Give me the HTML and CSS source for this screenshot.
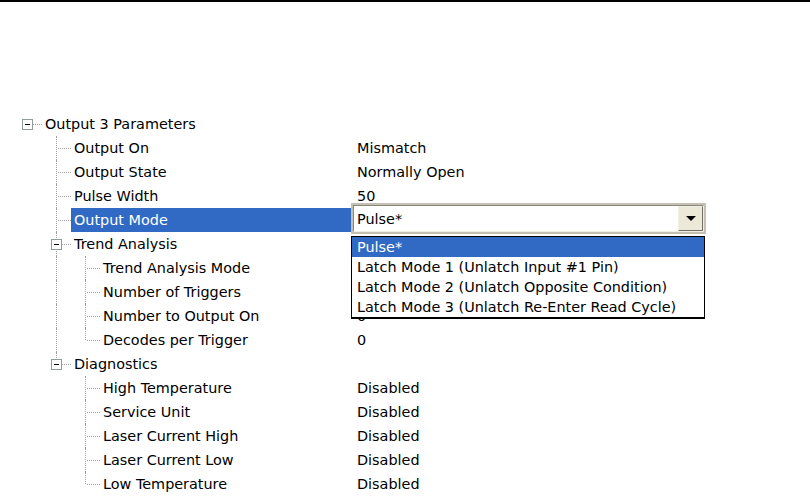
FILE: index.html
```html
<!DOCTYPE html>
<html>
<head>
<meta charset="utf-8">
<link rel="stylesheet" href="styles.css">
</head>
<body>
<div class="rule"></div>
<div class="tree">
  <div class="row">
    <div class="name">
      <span class="c root"><span class="box"></span></span>
      <span class="label">Output 3 Parameters</span>
    </div>
    <div class="value"></div>
  </div>
  <div class="row">
    <div class="name"><span class="c"></span><span class="c tee"></span><span class="label">Output On</span></div>
    <div class="value">Mismatch</div>
  </div>
  <div class="row">
    <div class="name"><span class="c"></span><span class="c tee"></span><span class="label">Output State</span></div>
    <div class="value">Normally Open</div>
  </div>
  <div class="row">
    <div class="name"><span class="c"></span><span class="c tee"></span><span class="label">Pulse Width</span></div>
    <div class="value">50</div>
  </div>
  <div class="row">
    <div class="name"><span class="c"></span><span class="c tee"></span><span class="label selected">Output Mode</span></div>
    <div class="value">
      <div class="combo">
        <div class="combo-inner">
          <span class="combo-text">Pulse*</span>
          <span class="combo-btn"><span class="arrow"></span></span>
        </div>
      </div>
      <div class="list">
        <div class="item on">Pulse*</div>
        <div class="item">Latch Mode 1 (Unlatch Input #1 Pin)</div>
        <div class="item">Latch Mode 2 (Unlatch Opposite Condition)</div>
        <div class="item">Latch Mode 3 (Unlatch Re-Enter Read Cycle)</div>
      </div>
    </div>
  </div>
  <div class="row">
    <div class="name"><span class="c"></span><span class="c tee"><span class="box"></span></span><span class="label">Trend Analysis</span></div>
    <div class="value"></div>
  </div>
  <div class="row">
    <div class="name"><span class="c"></span><span class="c pipe"></span><span class="c tee"></span><span class="label">Trend Analysis Mode</span></div>
    <div class="value"></div>
  </div>
  <div class="row">
    <div class="name"><span class="c"></span><span class="c pipe"></span><span class="c tee"></span><span class="label">Number of Triggers</span></div>
    <div class="value"></div>
  </div>
  <div class="row">
    <div class="name"><span class="c"></span><span class="c pipe"></span><span class="c tee"></span><span class="label">Number to Output On</span></div>
    <div class="value">0</div>
  </div>
  <div class="row">
    <div class="name"><span class="c"></span><span class="c pipe"></span><span class="c ell"></span><span class="label">Decodes per Trigger</span></div>
    <div class="value">0</div>
  </div>
  <div class="row">
    <div class="name"><span class="c"></span><span class="c ell"><span class="box"></span></span><span class="label">Diagnostics</span></div>
    <div class="value"></div>
  </div>
  <div class="row">
    <div class="name"><span class="c"></span><span class="c"></span><span class="c tee"></span><span class="label">High Temperature</span></div>
    <div class="value">Disabled</div>
  </div>
  <div class="row">
    <div class="name"><span class="c"></span><span class="c"></span><span class="c tee"></span><span class="label">Service Unit</span></div>
    <div class="value">Disabled</div>
  </div>
  <div class="row">
    <div class="name"><span class="c"></span><span class="c"></span><span class="c tee"></span><span class="label">Laser Current High</span></div>
    <div class="value">Disabled</div>
  </div>
  <div class="row">
    <div class="name"><span class="c"></span><span class="c"></span><span class="c tee"></span><span class="label">Laser Current Low</span></div>
    <div class="value">Disabled</div>
  </div>
  <div class="row">
    <div class="name"><span class="c"></span><span class="c"></span><span class="c ell"></span><span class="label">Low Temperature</span></div>
    <div class="value">Disabled</div>
  </div>
</div>
</body>
</html>
```
FILE: styles.css
```css
html, body {
  margin: 0;
  padding: 0;
  background: #ffffff;
}
body {
  font-family: "DejaVu Sans", Verdana, sans-serif;
  font-size: 14.4px;
  color: #000000;
  width: 810px;
  height: 500px;
  overflow: hidden;
}
.rule {
  height: 2px;
  background: #000000;
}
.tree {
  margin-top: 110px;
}
.row {
  display: flex;
  height: 24px;
  line-height: 24px;
}
.name {
  width: 351px;
  flex: 0 0 351px;
  display: flex;
  padding-left: 13px;
  box-sizing: border-box;
}
.c {
  flex: 0 0 29px;
  width: 29px;
  height: 24px;
  position: relative;
}
.c.pipe::before,
.c.tee::before {
  content: "";
  position: absolute;
  left: 14px;
  top: 0;
  height: 24px;
  border-left: 1px dotted #a0a0a0;
}
.c.ell::before {
  content: "";
  position: absolute;
  left: 14px;
  top: 0;
  height: 12px;
  border-left: 1px dotted #a0a0a0;
}
.c.tee::after,
.c.ell::after,
.c.root::after {
  content: "";
  position: absolute;
  left: 16px;
  right: 0;
  top: 12px;
  border-top: 1px dotted #a0a0a0;
}
.box {
  position: absolute;
  left: 9px;
  top: 7px;
  width: 9px;
  height: 9px;
  border: 1px solid #919b9c;
  background: #ffffff;
  z-index: 1;
}
.box::after {
  content: "";
  position: absolute;
  left: 2px;
  top: 4px;
  width: 5px;
  height: 1px;
  background: #000000;
}
.label {
  flex: 1 1 auto;
  padding-left: 3px;
  white-space: nowrap;
}
.label.selected {
  background: #316ac5;
  color: #ffffff;
}
.value {
  flex: 1 1 auto;
  padding-left: 6px;
  position: relative;
  white-space: nowrap;
}
.combo {
  position: absolute;
  left: 0;
  top: -5px;
  width: 355px;
  height: 31px;
  box-sizing: border-box;
  border: 2px solid #c4c1b4;
  background: #ffffff;
  z-index: 2;
}
.combo-inner {
  height: 100%;
  box-sizing: border-box;
  border-top: 1px solid #8a887c;
  border-left: 1px solid #8a887c;
  border-right: 1px solid #f1efe2;
  border-bottom: 1px solid #f1efe2;
  display: flex;
  align-items: center;
  justify-content: space-between;
}
.combo-text {
  padding-left: 3px;
  line-height: 24px;
}
.combo-btn {
  width: 25px;
  height: 25px;
  box-sizing: border-box;
  background: #ece9d8;
  border-top: 1px solid #f1efe2;
  border-left: 1px solid #f1efe2;
  border-right: 1px solid #716f64;
  border-bottom: 1px solid #716f64;
  display: flex;
  align-items: center;
  justify-content: center;
}
.arrow {
  width: 0;
  height: 0;
  border-left: 5px solid transparent;
  border-right: 5px solid transparent;
  border-top: 5px solid #000000;
}
.list {
  position: absolute;
  left: 0;
  top: 28px;
  width: 354px;
  box-sizing: border-box;
  border: 1px solid #000000;
  border-bottom-width: 2px;
  background: #ffffff;
  z-index: 2;
}
.item {
  height: 20px;
  line-height: 20px;
  padding-left: 5px;
  white-space: nowrap;
}
.item.on {
  background: #316ac5;
  color: #ffffff;
}
```
